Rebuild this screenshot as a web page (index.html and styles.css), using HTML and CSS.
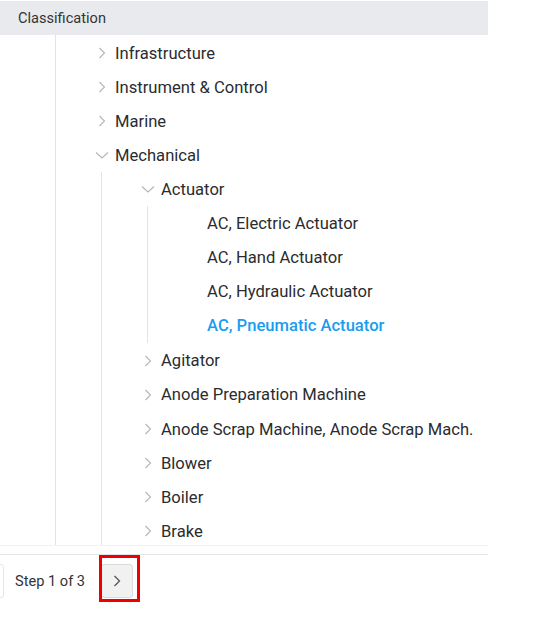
FILE: index.html
```html
<!DOCTYPE html>
<html>
<head>
<meta charset="utf-8">
<link rel="stylesheet" href="styles.css">
</head>
<body>
<div class="panel">
  <div class="header">Classification</div>
  <div class="tree">
    <div class="group root">
      <div class="row"><span class="chev"><svg viewBox="0 0 10 12" width="10" height="12"><polyline points="2.5,1 7.5,6 2.5,11"/></svg></span><span class="label">Infrastructure</span></div>
      <div class="row"><span class="chev"><svg viewBox="0 0 10 12" width="10" height="12"><polyline points="2.5,1 7.5,6 2.5,11"/></svg></span><span class="label">Instrument &amp; Control</span></div>
      <div class="row"><span class="chev"><svg viewBox="0 0 10 12" width="10" height="12"><polyline points="2.5,1 7.5,6 2.5,11"/></svg></span><span class="label">Marine</span></div>
      <div class="row"><span class="chev down"><svg viewBox="0 0 14 8" width="14" height="8"><polyline points="1,1.5 7,7 13,1.5"/></svg></span><span class="label">Mechanical</span></div>
      <div class="group sub">
        <div class="row"><span class="chev down"><svg viewBox="0 0 14 8" width="14" height="8"><polyline points="1,1.5 7,7 13,1.5"/></svg></span><span class="label">Actuator</span></div>
        <div class="group sub leafs">
          <div class="row"><span class="chev"></span><span class="label">AC, Electric Actuator</span></div>
          <div class="row"><span class="chev"></span><span class="label">AC, Hand Actuator</span></div>
          <div class="row"><span class="chev"></span><span class="label">AC, Hydraulic Actuator</span></div>
          <div class="row"><span class="chev"></span><span class="label selected">AC, Pneumatic Actuator</span></div>
        </div>
        <div class="row"><span class="chev"><svg viewBox="0 0 10 12" width="10" height="12"><polyline points="2.5,1 7.5,6 2.5,11"/></svg></span><span class="label">Agitator</span></div>
        <div class="row"><span class="chev"><svg viewBox="0 0 10 12" width="10" height="12"><polyline points="2.5,1 7.5,6 2.5,11"/></svg></span><span class="label">Anode Preparation Machine</span></div>
        <div class="row"><span class="chev"><svg viewBox="0 0 10 12" width="10" height="12"><polyline points="2.5,1 7.5,6 2.5,11"/></svg></span><span class="label">Anode Scrap Machine, Anode Scrap Mach.</span></div>
        <div class="row"><span class="chev"><svg viewBox="0 0 10 12" width="10" height="12"><polyline points="2.5,1 7.5,6 2.5,11"/></svg></span><span class="label">Blower</span></div>
        <div class="row"><span class="chev"><svg viewBox="0 0 10 12" width="10" height="12"><polyline points="2.5,1 7.5,6 2.5,11"/></svg></span><span class="label">Boiler</span></div>
        <div class="row"><span class="chev"><svg viewBox="0 0 10 12" width="10" height="12"><polyline points="2.5,1 7.5,6 2.5,11"/></svg></span><span class="label">Brake</span></div>
      </div>
    </div>
  </div>
  <div class="sep"></div>
  <div class="footer">
    <div class="btn prev"></div>
    <span class="step">Step 1 of 3</span>
    <div class="btn next"><svg viewBox="0 0 10 14" width="10" height="14"><polyline points="2.5,2 7.5,7 2.5,12"/></svg></div>
  </div>
</div>
<div class="highlight"></div>
</body>
</html>
```
FILE: styles.css
```css
html, body {
  margin: 0;
  padding: 0;
  background: #ffffff;
}
body {
  font-family: Roboto, "Liberation Sans", sans-serif;
  color: #2b2c2f;
  position: relative;
  width: 554px;
  height: 630px;
  overflow: hidden;
}
.panel {
  width: 488px;
  padding-top: 1px;
}
.header {
  height: 34px;
  background: #e9eaee;
  font-size: 14.6px;
  line-height: 34px;
  padding-left: 18px;
  color: #333438;
}
.tree {
  height: 510px;
  overflow: hidden;
  border-bottom: 1px solid #f3f3f5;
}
.group {
  border-left: 1px solid #e3e4e7;
  margin-left: 4px;
  padding-left: 41px;
}
.group.root {
  margin-left: 55px;
  padding-top: 1px;
}
.group.sub {
  margin-top: 6px;
}
.group.sub > .row:first-child {
  margin-top: -6px;
}
.group.leafs {
  margin-bottom: 1px;
}
.row {
  height: 34.1px;
  display: flex;
  align-items: center;
  white-space: nowrap;
}
.chev {
  width: 18px;
  flex: 0 0 18px;
  display: flex;
  align-items: center;
}
.chev svg {
  display: block;
  fill: none;
  stroke: #b4b5b8;
  stroke-width: 1.1;
}
.chev.down {
  margin-left: -2px;
  width: 20px;
  flex-basis: 20px;
}
.label {
  font-size: 16.6px;
  color: #2b2c2f;
}
.label.selected {
  color: #1a9cf0;
  font-weight: 500;
}
.sep {
  height: 8px;
  border-bottom: 1px solid #e1e4e9;
}
.footer {
  display: flex;
  align-items: center;
  padding-top: 9px;
  height: 34px;
}
.btn {
  height: 32px;
  width: 30px;
  border: 1px solid #dcdcdc;
  border-radius: 3px;
  background: #f1f1f1;
  box-sizing: content-box;
}
.btn.prev {
  margin-left: -28px;
  background: #ffffff;
  border-color: #e6e6e6;
}
.step {
  font-size: 14.6px;
  margin-left: 11px;
  color: #333438;
}
.btn.next {
  margin-left: 16px;
  display: flex;
  align-items: center;
  justify-content: center;
}
.btn.next svg {
  fill: none;
  stroke: #555659;
  stroke-width: 1.3;
}
.highlight {
  position: absolute;
  left: 99px;
  top: 555px;
  width: 41px;
  height: 47px;
  border: 3px solid #ee0000;
  box-sizing: border-box;
}
```
